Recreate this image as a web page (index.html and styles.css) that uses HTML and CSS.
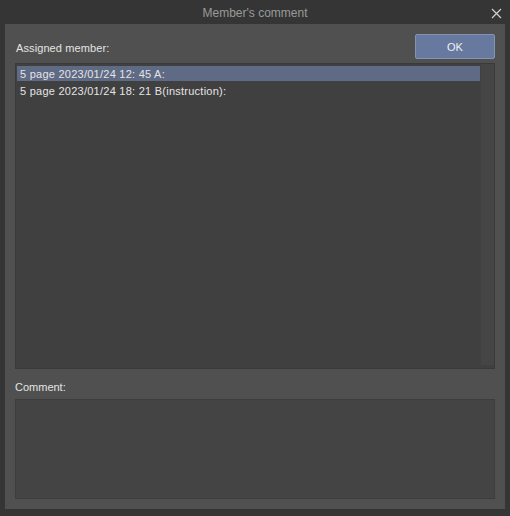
FILE: index.html
```html
<!DOCTYPE html>
<html lang="en">

<head>
    <meta charset="UTF-8">
    <title>Member's comment</title>

    <link rel="stylesheet" href="styles.css">
</head>

<body>
    <div class="window">
        <div class="titlebar">
            <span class="title">Member's comment</span>
            <span class="close">
                <svg width="11" height="11" viewBox="0 0 11 11">
                    <path d="M1 1 L10 10 M10 1 L1 10" stroke="#cfcfcf" stroke-width="1.2" fill="none" />
                </svg>
            </span>
        </div>

        <main class="panel">
            <div class="header">
                <label>Assigned member:</label>
                <button>OK</button>
            </div>

            <div class="list">
                <div class="rows">
                    <div class="row selected">5 page 2023/01/24 12: 45 A:</div>
                    <div class="row">5 page 2023/01/24 18: 21 B(instruction):</div>
                </div>
                <div class="scrollbar"></div>
            </div>

            <label class="comment-label">Comment:</label>
            <div class="comment"></div>
        </main>
    </div>
</body>

</html>
```

FILE: styles.css
```css
html,
body {
    margin: 0;
    background-color: #353535;
    font-family: "Liberation Sans", Arial, sans-serif;
    font-size: 11px;
    color: #e4e4e4;
}

.window {
    width: 510px;
    height: 516px;
    display: flex;
    flex-direction: column;
}

.titlebar {
    height: 24px;
    display: flex;
    align-items: center;
    justify-content: center;
    position: relative;
}

.title {
    color: #9a9a9a;
    font-size: 12px;
    margin-top: 1px;
}

.close {
    position: absolute;
    right: 8px;
    top: 8px;
    line-height: 0;
}

.panel {
    margin: 0 5px;
    height: 485px;
    box-sizing: border-box;
    padding: 10px;
    background-color: #505050;
    display: flex;
    flex-direction: column;
}

.header {
    display: flex;
    justify-content: space-between;
    align-items: center;
    height: 25px;
}

.header label {
    padding-left: 1px;
    padding-top: 2px;
    letter-spacing: 0.1px;
}

button {
    width: 80px;
    height: 25px;
    background-color: #68799f;
    border: 1px solid #8493b4;
    border-radius: 2px;
    color: #eef0f5;
    font-family: inherit;
    font-size: 11px;
    padding: 0;
}

.list {
    margin-top: 4px;
    height: 306px;
    background-color: #404040;
    border: 1px solid #3a3a3a;
    box-sizing: border-box;
    display: flex;
}

.rows {
    flex: 1;
    padding: 2px 1px;
}

.row {
    height: 15px;
    line-height: 16px;
    margin-bottom: 2px;
    padding-left: 3px;
    letter-spacing: 0.25px;
    white-space: nowrap;
}

.row.selected {
    background-color: #5f6a84;
}

.scrollbar {
    width: 13px;
    margin-bottom: 3px;
    background-color: #454545;
}

.comment-label {
    margin-top: 12px;
    height: 18px;
}

.comment {
    height: 100px;
    box-sizing: border-box;
    background-color: #444444;
    border: 1px solid #3d3d3d;
}
```
